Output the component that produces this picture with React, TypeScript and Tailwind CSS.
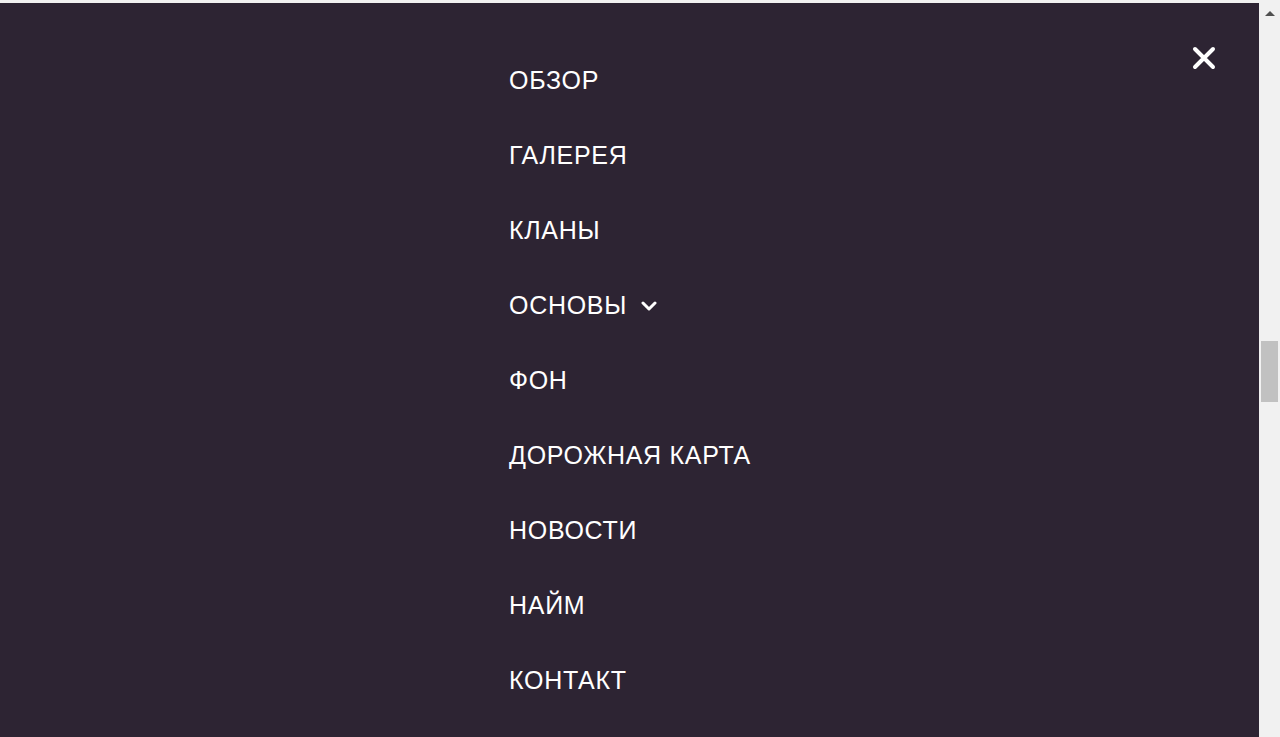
const links = [
  { label: "ОБЗОР" },
  { label: "ГАЛЕРЕЯ" },
  { label: "КЛАНЫ" },
  { label: "ОСНОВЫ", sub: true },
  { label: "ФОН" },
  { label: "ДОРОЖНАЯ КАРТА" },
  { label: "НОВОСТИ" },
  { label: "НАЙМ" },
  { label: "КОНТАКТ" },
];

export default function App() {
  return (
    <div className="h-[737px] w-full flex overflow-hidden bg-[#f1f1f1] font-['Liberation_Sans',Arial,sans-serif]">
      {/* menu overlay */}
      <div className="relative flex-1 mt-[3px] bg-[#2d2433] text-white">
        <button
          type="button"
          aria-label="Close"
          className="absolute top-[41px] right-[41px] w-[28px] h-[28px] flex items-center justify-center"
        >
          <svg width="24" height="24" viewBox="0 0 24 24" fill="none" stroke="white" strokeWidth="4" strokeLinecap="round">
            <path d="M3 3 L21 21 M21 3 L3 21" />
          </svg>
        </button>

        <nav className="pl-[509px] pt-[40px]">
          <ul className="flex flex-col">
            {links.map((l) => (
              <li key={l.label} className="h-[75px] flex items-center">
                <a href="#" className="flex items-center gap-[14px] text-[25px] leading-[75px] tracking-[0.7px] text-white">
                  {l.label}
                  {l.sub && (
                    <svg width="16" height="10" viewBox="0 0 16 10" fill="none" stroke="white" strokeWidth="3" strokeLinecap="round" strokeLinejoin="round">
                      <polyline points="2,2 8,8 14,2" />
                    </svg>
                  )}
                </a>
              </li>
            ))}
          </ul>
        </nav>
      </div>

      {/* scrollbar */}
      <div className="w-[21px] flex flex-col items-center bg-[#f1f1f1]">
        <div className="mt-[11px] w-0 h-0 border-l-[5px] border-r-[5px] border-b-[5px] border-l-transparent border-r-transparent border-b-[#505050]" />
        <div className="mt-[325px] w-[17px] h-[61px] bg-[#c1c1c1]" />
      </div>
    </div>
  );
}
